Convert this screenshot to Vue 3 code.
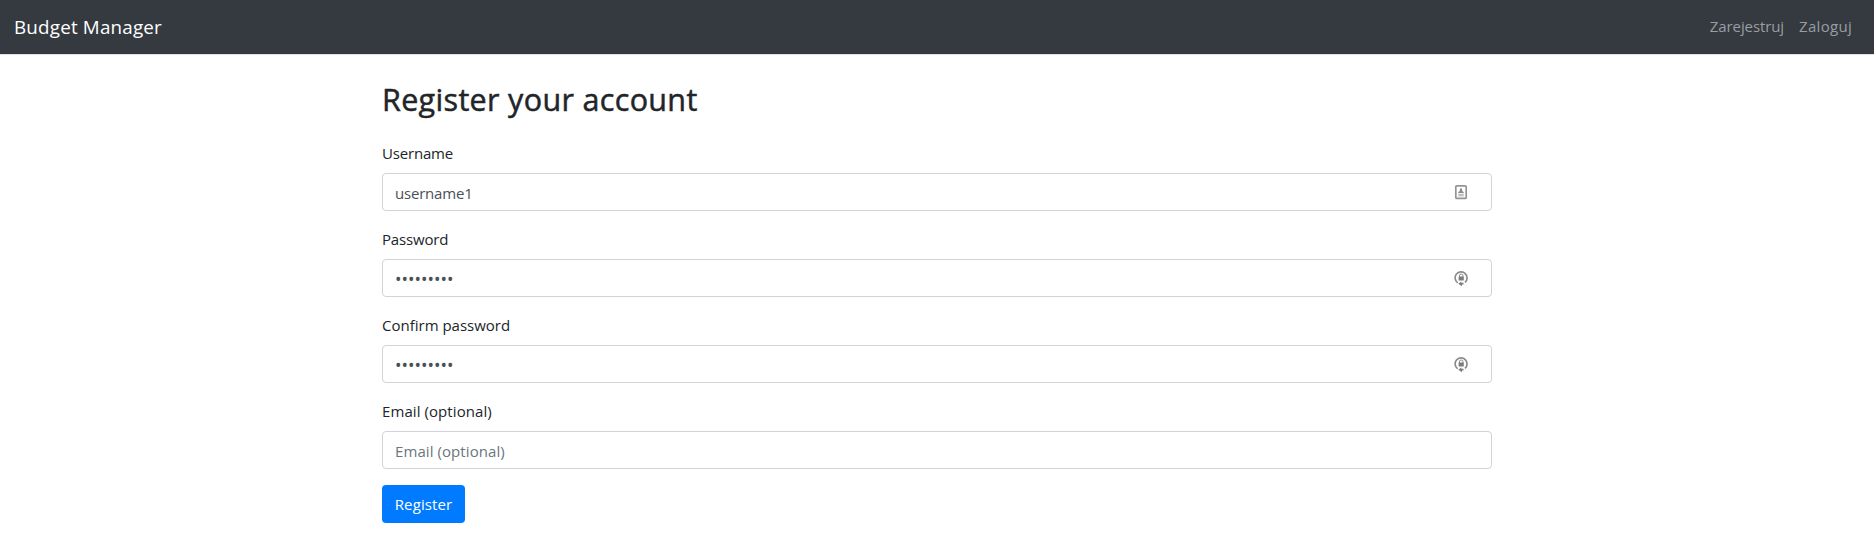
<script setup>
import { ref } from 'vue'

const fields = ref([
  { id: 'username', label: 'Username', type: 'text', value: 'username1', icon: 'card' },
  { id: 'password', label: 'Password', type: 'password', value: 'password1', icon: 'lock' },
  { id: 'confirm', label: 'Confirm password', type: 'password', value: 'password1', icon: 'lock' },
  { id: 'email', label: 'Email (optional)', type: 'text', value: '', placeholder: 'Email (optional)' }
])
</script>

<template>
  <div class="page">
    <nav class="navbar">
      <a class="brand">Budget Manager</a>
      <div class="links">
        <a class="link register-link">Zarejestruj</a>
        <a class="link login-link">Zaloguj</a>
      </div>
    </nav>
    <main class="container">
      <h2 class="title">Register your account</h2>
      <form @submit.prevent>
        <div v-for="f in fields" :key="f.id" class="group">
          <label :for="f.id" :class="'label-' + f.id">{{ f.label }}</label>
          <div class="control">
            <input
              :id="f.id"
              v-model="f.value"
              :type="f.type"
              :placeholder="f.placeholder"
              autocomplete="off"
              spellcheck="false"
            />
            <svg v-if="f.icon === 'card'" class="icon" viewBox="0 0 16 16">
              <rect x="2.8" y="1.8" width="10.4" height="12.6" rx="1" fill="#fff" stroke="#949494" stroke-width="1.7" />
              <path d="M8 3.800l1.200 1.700v1.400l1.600 1.300v.9H5.200v-.9l1.600-1.300V5.500z" fill="#8c8c8c" />
              <path d="M5.200 10.300h5.600M5.200 11.800h5.600" stroke="#b0b0b0" stroke-width="1" />
            </svg>
            <svg v-else-if="f.icon === 'lock'" class="icon" viewBox="0 0 16 16">
              <path d="M4.700 12.800A6 6 0 1 1 12 12.400" fill="none" stroke="#8a8a8a" stroke-width="1.700" />
              <path d="M6.400 7V5.800a1.800 1.800 0 0 1 3.600 0V7" fill="none" stroke="#8a8a8a" stroke-width="1" />
              <rect x="5.600" y="6.600" width="5.200" height="3.900" rx=".4" fill="#7c7c7c" />
              <path d="M5.300 13.700L8.300 11.500v1.200h2.200v1.800H8.900V16.300z" fill="#7c7c7c" />
            </svg>
          </div>
        </div>
        <button type="submit">Register</button>
      </form>
    </main>
  </div>
</template>

<style>
body {
  margin: 0;
  background: #fff;
}
</style>

<style scoped>
.page {
  height: 552px;
  overflow: hidden;
  font-family: "Open Sans", "Noto Sans", sans-serif;
  font-size: 15px;
  line-height: 24px;
  color: #212529;
}
.navbar {
  box-sizing: border-box;
  height: 55px;
  padding: 0 22px 0 13px;
  display: flex;
  align-items: center;
  justify-content: space-between;
  background: #343a40;
  border-bottom: 1px solid #dee2e6;
}
.brand {
  padding-left: 1px;
  font-size: 18.8px;
  line-height: 30px;
  letter-spacing: 0.2px;
  color: #fff;
}
.links {
  display: flex;
  gap: 15px;
  padding-bottom: 2px;
}
.link {
  color: #9a9da0;
}
.register-link {
  letter-spacing: -0.1px;
}
.login-link {
  letter-spacing: 0.3px;
}
.container {
  width: 1110px;
  margin: 0 auto;
  padding-top: 25px;
}
.title {
  margin: 0 0 23px;
  font-size: 30.5px;
  line-height: 38px;
  font-weight: 500;
  letter-spacing: 0.33px;
  -webkit-text-stroke: 0.5px #212529;
}
.group {
  margin-bottom: 16px;
}
label {
  display: block;
  margin-bottom: 8px;
}
.label-username,
.label-password {
  letter-spacing: -0.18px;
}
.label-email {
  letter-spacing: 0.08px;
}
.control {
  position: relative;
  height: 38px;
}
input {
  box-sizing: border-box;
  display: block;
  width: 100%;
  height: 38px;
  padding: 7px 12px 5px;
  border: 1px solid #ced4da;
  border-radius: 4px;
  outline: none;
  background: #fff;
  color: #495057;
  font: inherit;
}
#username {
  letter-spacing: -0.2px;
}
input[type="password"] {
  font-size: 17.3px;
}
input::placeholder {
  color: #6c757d;
  opacity: 1;
  letter-spacing: 0.08px;
}
.icon {
  position: absolute;
  right: 23px;
  top: 11px;
  width: 16px;
  height: 16px;
}
button {
  display: block;
  height: 38px;
  padding: 0;
  width: 83px;
  border: 0;
  border-radius: 4px;
  background: #007bff;
  color: #fff;
  font: inherit;
  letter-spacing: 0.1px;
}
</style>
